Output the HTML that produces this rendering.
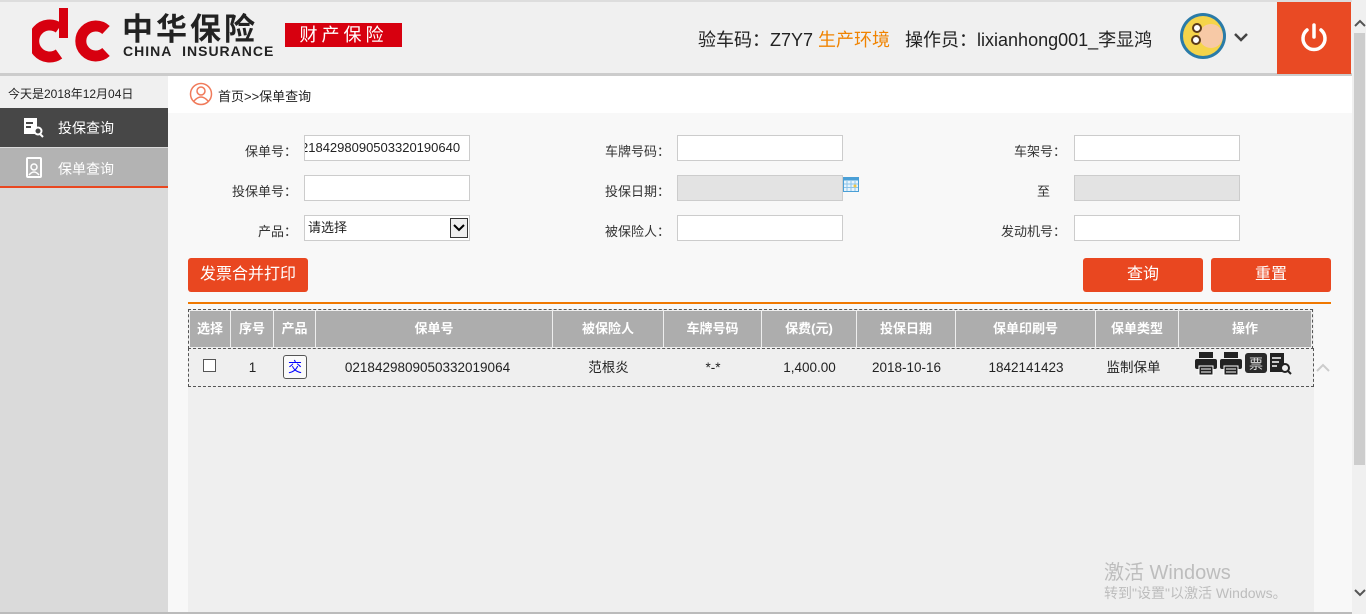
<!DOCTYPE html>
<html><head><meta charset="utf-8"><style>
*{margin:0;padding:0;box-sizing:border-box}
body{width:1366px;height:614px;overflow:hidden;background:#f8f8f8;font-family:"Liberation Sans","Noto Sans CJK SC",sans-serif;font-size:13px;color:#222;position:relative}
.a{position:absolute}
.hdr{left:0;top:0;width:1352px;background:#f0f0f0;border-top:2px solid #ddd;border-bottom:3px solid #ccc;height:76px}
.lbl{font-size:13px;color:#333;text-align:right;width:120px}
.in{height:26px;border:1px solid #ccc;background:#fff;font-size:13px;line-height:24px;padding-left:2px;overflow:hidden;white-space:nowrap}
.btn{background:#e94720;color:#fff;font-size:16px;text-align:center;border-radius:3px;line-height:34px;height:34px}
.th{top:311px;height:36px;line-height:36px;background:#adadad;color:#fff;font-weight:bold;text-align:center;font-size:13px;border-right:1px solid #eee}
.td{top:349px;height:37px;line-height:37px;text-align:center;font-size:13.5px;color:#222}
</style></head><body>
<div class="a hdr"></div>
<svg class="a" style="left:32px;top:8px" width="80" height="56" viewBox="0 0 80 56">
<path d="M27 20 A16 16 0 1 0 27 46" stroke="#d7000f" stroke-width="11" fill="none"/>
<rect x="27" y="0" width="9" height="30" fill="#d7000f"/>
<path d="M74 22 A15 15 0 1 0 74 44" stroke="#d7000f" stroke-width="11" fill="none"/>
</svg>
<div class="a" style="left:122px;top:8px;font-size:31px;font-weight:bold;color:#222;letter-spacing:3px;font-family:'Noto Sans CJK SC',sans-serif;line-height:38px">中华保险</div>
<div class="a" style="left:123px;top:43px;font-size:14px;font-weight:bold;color:#222;letter-spacing:1px">CHINA&nbsp; INSURANCE</div>
<div class="a" style="left:285px;top:23px;width:117px;height:24px;background:#d7000f;color:#fff;font-size:18px;line-height:24px;text-align:center;letter-spacing:4px">财产保险</div>
<div class="a" style="left:698px;top:26px;font-size:18px;color:#222;white-space:nowrap">验车码：Z7Y7 <span style="color:#f08300">生产环境</span>&nbsp;&nbsp; 操作员：lixianhong001_李显鸿</div>
<svg class="a" style="left:1179px;top:12px" width="48" height="48"><circle cx="24" cy="24" r="23" fill="#2a7ba8"/><circle cx="24" cy="24" r="20" fill="#f5d44a"/><circle cx="32" cy="24" r="12" fill="#f7c9a6"/><circle cx="18" cy="16" r="4" fill="#fff" stroke="#5a3a1a" stroke-width="2"/><circle cx="17" cy="28" r="4" fill="#fff" stroke="#5a3a1a" stroke-width="2"/></svg>
<svg class="a" style="left:1233px;top:32px" width="16" height="12"><path d="M2 2 L8 8 L14 2" stroke="#444" stroke-width="2.5" fill="none"/></svg>
<div class="a" style="left:1277px;top:2px;width:74px;height:72px;background:#e94a24"></div>
<svg class="a" style="left:1298px;top:22px" width="32" height="32"><path d="M9 8 A11 11 0 1 0 23 8" stroke="#fff" stroke-width="3.5" fill="none" stroke-linecap="round"/><line x1="16" y1="3" x2="16" y2="15" stroke="#fff" stroke-width="3.5" stroke-linecap="round"/></svg>
<div class="a" style="left:1352px;top:0;width:14px;height:614px;background:#f0f0f0"></div>
<div class="a" style="left:1354px;top:33px;width:11px;height:432px;background:#cdcdcd"></div>
<svg class="a" style="left:1354px;top:18px" width="12" height="10"><path d="M1 8 L6 3 L11 8" stroke="#555" stroke-width="2" fill="none"/></svg>
<svg class="a" style="left:1354px;top:588px" width="12" height="10"><path d="M1 2 L6 7 L11 2" stroke="#555" stroke-width="2" fill="none"/></svg>
<div class="a" style="left:0;top:76px;width:168px;height:538px;background:#dadada"></div>
<div class="a" style="left:0;top:76px;width:168px;height:32px;background:#f0f0f0;font-size:12px;line-height:37px;padding-left:8px">今天是2018年12月04日</div>
<div class="a" style="left:0;top:108px;width:168px;height:39px;background:#474747;color:#fff;font-size:14px;line-height:41px;padding-left:58px">投保查询</div>
<svg class="a" style="left:24px;top:118px" width="20" height="20"><rect x="0" y="0" width="13" height="16" fill="#fff"/><rect x="2" y="4" width="7" height="2" fill="#474747"/><rect x="2" y="8" width="5" height="2" fill="#474747"/><circle cx="14" cy="13" r="3.5" stroke="#fff" stroke-width="2" fill="#474747"/><line x1="16" y1="16" x2="19" y2="19" stroke="#fff" stroke-width="2"/></svg>
<div class="a" style="left:0;top:148px;width:168px;height:38px;background:#b3b3b3;color:#fff;font-size:14px;line-height:42px;padding-left:58px">保单查询</div>
<svg class="a" style="left:24px;top:157px" width="20" height="22"><rect x="3" y="1" width="14" height="19" stroke="#fff" stroke-width="2" fill="none" rx="1"/><circle cx="10" cy="10" r="3" stroke="#fff" stroke-width="1.5" fill="none"/><path d="M5 18 Q10 12 15 18" stroke="#fff" stroke-width="1.5" fill="none"/></svg>
<div class="a" style="left:0;top:186px;width:168px;height:2px;background:#e94720"></div>
<div class="a" style="left:168px;top:76px;width:1184px;height:37px;background:#fff"></div>
<svg class="a" style="left:189px;top:82px" width="24" height="24"><circle cx="12" cy="12" r="10.5" stroke="#f07a5a" stroke-width="1.5" fill="none"/><circle cx="12" cy="9" r="4" stroke="#f07a5a" stroke-width="1.5" fill="none"/><path d="M5 19 Q12 11 19 19" stroke="#f07a5a" stroke-width="1.5" fill="none"/></svg>
<div class="a" style="left:218px;top:86px;font-size:13px">首页&gt;&gt;保单查询</div>
<div class="a lbl" style="left:177px;top:141px">保单号：</div>
<div class="a in" style="left:304px;top:135px;width:166px;color:#222;padding-left:0"><span style="margin-left:-4px">2184298090503320190640</span></div>
<div class="a lbl" style="left:177px;top:181px">投保单号：</div>
<div class="a in" style="left:304px;top:175px;width:166px"></div>
<div class="a lbl" style="left:177px;top:221px">产品：</div>
<div class="a in" style="left:304px;top:215px;width:166px;padding-left:3px">请选择</div>
<div class="a" style="left:450px;top:218px;width:18px;height:20px;border:1px solid #333;background:#eee"></div>
<svg class="a" style="left:452px;top:222px" width="14" height="12"><path d="M2 3 L7 8 L12 3" stroke="#000" stroke-width="2" fill="none"/></svg>
<div class="a lbl" style="left:550px;top:141px">车牌号码：</div>
<div class="a in" style="left:677px;top:135px;width:166px"></div>
<div class="a lbl" style="left:550px;top:181px">投保日期：</div>
<div class="a in" style="left:677px;top:175px;width:166px;background:#e3e3e3"></div>
<svg class="a" style="left:843px;top:177px" width="17" height="15"><rect x="0.5" y="0.5" width="15" height="14" fill="#e8f4fc" stroke="#4a9fd6"/><rect x="0.5" y="0.5" width="15" height="3" fill="#4a9fd6"/><path d="M4 4V14M8 4V14M12 4V14M1 7H15M1 10.5H15" stroke="#8cc4ea" stroke-width="1"/><circle cx="12" cy="9" r="1.5" fill="#f3c640"/></svg>
<div class="a lbl" style="left:550px;top:221px">被保险人：</div>
<div class="a in" style="left:677px;top:215px;width:166px"></div>
<div class="a lbl" style="left:946px;top:141px">车架号：</div>
<div class="a in" style="left:1074px;top:135px;width:166px"></div>
<div class="a lbl" style="left:942px;top:181px;width:108px">至</div>
<div class="a in" style="left:1074px;top:175px;width:166px;background:#e3e3e3"></div>
<div class="a lbl" style="left:946px;top:221px">发动机号：</div>
<div class="a in" style="left:1074px;top:215px;width:166px"></div>
<div class="a btn" style="left:188px;top:258px;width:120px">发票合并打印</div>
<div class="a btn" style="left:1083px;top:258px;width:120px">查询</div>
<div class="a btn" style="left:1211px;top:258px;width:120px">重置</div>
<div class="a" style="left:188px;top:302px;width:1143px;height:2px;background:#f07800"></div>
<div class="a" style="left:188px;top:309px;width:1126px;height:305px;background:#efefef"></div>
<div class="a" style="left:188px;top:309px;width:1125px;height:40px;border:1px dashed #555;border-bottom:none"></div>
<div class="a" style="left:188px;top:348px;width:1126px;height:39px;border:1px dashed #555"></div>
<div class="a th" style="left:190px;width:41px">选择</div>
<div class="a th" style="left:231px;width:43px">序号</div>
<div class="a th" style="left:274px;width:42px">产品</div>
<div class="a th" style="left:316px;width:237px">保单号</div>
<div class="a th" style="left:553px;width:111px">被保险人</div>
<div class="a th" style="left:664px;width:98px">车牌号码</div>
<div class="a th" style="left:762px;width:95px">保费(元)</div>
<div class="a th" style="left:857px;width:99px">投保日期</div>
<div class="a th" style="left:956px;width:140px">保单印刷号</div>
<div class="a th" style="left:1096px;width:83px">保单类型</div>
<div class="a th" style="left:1179px;width:132px;border-right:none">操作</div>
<div class="a" style="left:203px;top:359px;width:13px;height:13px;border:1px solid #555;background:#fff"></div>
<div class="a td" style="left:231px;width:43px">1</div>
<div class="a" style="left:283px;top:355px;width:24px;height:24px;border:1px solid #555;border-radius:3px;color:#00f;text-align:center;line-height:22px;font-size:14px;background:#fafafa">交</div>
<div class="a td" style="left:316px;width:237px;padding-right:14px">0218429809050332019064</div>
<div class="a td" style="left:553px;width:111px">范根炎</div>
<div class="a td" style="left:664px;width:98px">*-*</div>
<div class="a td" style="left:762px;width:95px">1,400.00</div>
<div class="a td" style="left:857px;width:99px">2018-10-16</div>
<div class="a td" style="left:956px;width:140px">1842141423</div>
<div class="a td" style="left:1092px;width:83px">监制保单</div>
<svg class="a" style="left:1195px;top:351px" width="100" height="26">
<g fill="#222"><rect x="4" y="1" width="14" height="6"/><rect x="0" y="8" width="22" height="10" rx="2"/><rect x="4" y="15" width="14" height="9" stroke="#fff" stroke-width="1"/><path d="M6 18h10M6 21h10" stroke="#fff"/></g>
<g fill="#222" transform="translate(25,0)"><rect x="4" y="1" width="14" height="6"/><rect x="0" y="8" width="22" height="10" rx="2"/><rect x="4" y="15" width="14" height="9" stroke="#fff" stroke-width="1"/><path d="M6 18h10M6 21h10" stroke="#fff"/></g>
<rect x="50" y="2" width="22" height="20" rx="3" fill="#2a2a2a"/>
<text x="61" y="18" font-size="14" fill="#ddd" text-anchor="middle" font-family="Noto Sans CJK SC,sans-serif">票</text>
<g transform="translate(75,2)"><rect x="0" y="0" width="14" height="19" fill="#222"/><path d="M2 5h9M2 9h7M2 13h5" stroke="#fff" stroke-width="1.5"/><circle cx="15" cy="15" r="4" stroke="#222" stroke-width="2" fill="#efefef"/><line x1="18" y1="18" x2="21" y2="21" stroke="#222" stroke-width="2"/></g>
</svg>
<div class="a" style="left:1314px;top:309px;width:38px;height:305px;background:#f8f8f8"></div>
<svg class="a" style="left:1315px;top:362px" width="16" height="12"><path d="M2 9 L8 3 L14 9" stroke="#ccc" stroke-width="2" fill="none"/></svg>
<div class="a" style="left:1104px;top:556px;font-size:20px;color:#bdbdbd">激活 Windows</div>
<div class="a" style="left:1104px;top:583px;font-size:14px;color:#bdbdbd">转到"设置"以激活 Windows。</div>
<div class="a" style="left:0;top:612px;width:1352px;height:2px;background:#bbb"></div>
</body></html>
